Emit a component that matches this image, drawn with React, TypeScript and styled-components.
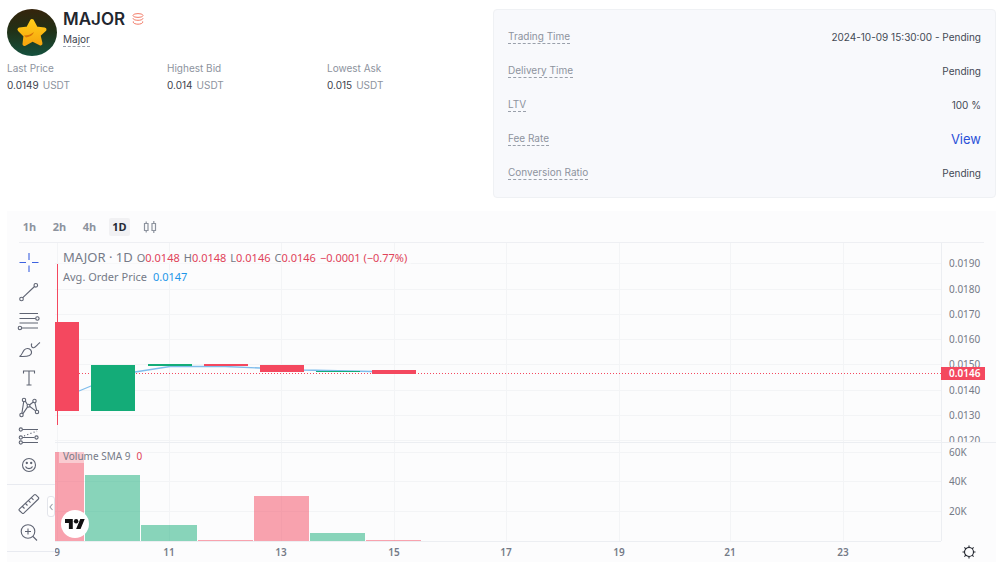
import React from "react";
import styled, { createGlobalStyle } from "styled-components";

const GlobalStyle = createGlobalStyle`
  *, *::before, *::after { box-sizing: border-box; }
  body {
    margin: 0;
    background: #ffffff;
    color: #4b515c;
    font-family: Inter, "Liberation Sans", sans-serif;
    font-size: 10px;
    line-height: 16px;
  }
  button { font: inherit; color: inherit; border: 0; background: none; padding: 0; cursor: pointer; }
`;

const chartFont = `"Noto Sans", "Open Sans", sans-serif`;
const red = "#f4485f";
const green = "#14ac78";

const Page = styled.main`
  padding: 9px 4px 0 7px;
`;

const Summary = styled.section`
  display: grid;
  grid-template-columns: 1fr 503px;
  column-gap: 6px;
  margin-bottom: 13px;
`;

const Identity = styled.div`
  display: flex;
  align-items: flex-start;
  gap: 6px;
  height: 50px;
`;

const Avatar = styled.svg`
  width: 50px;
  height: 47px;
  flex: none;
`;

const Names = styled.div`
  display: flex;
  flex-direction: column;
  align-items: flex-start;
  gap: 4px;
`;

const Title = styled.h1`
  display: flex;
  align-items: center;
  gap: 7px;
  margin: 0;
  font-size: 17px;
  line-height: 20px;
  font-weight: 600;
  color: #22262f;
`;

const Hint = styled.span<{ $strong?: boolean }>`
  border-bottom: 1px dashed #9aa0ab;
  line-height: 13px;
  color: ${(p) => (p.$strong ? "#3c424d" : "#8d939e")};
`;

const Stats = styled.dl`
  display: flex;
  margin: 0;
`;

const Stat = styled.div`
  flex: 0 0 160px;
`;

const StatLabel = styled.dt`
  line-height: 18px;
  color: #8d939e;
`;

const StatValue = styled.dd`
  margin: 0;
  line-height: 17px;
  color: #3c424d;
`;

const Unit = styled.span`
  color: #8d939e;
  margin-left: 4px;
`;

const Card = styled.dl`
  display: flex;
  flex-direction: column;
  gap: 14px;
  margin: 0;
  padding: 17px 14px 14px;
  background: #f8f9fc;
  border: 1px solid #eff1f4;
  border-radius: 4px;
`;

const CardRow = styled.div`
  display: flex;
  align-items: center;
  justify-content: space-between;
  height: 20px;
`;

const Term = styled.dt`
  display: flex;
`;

const Detail = styled.dd`
  margin: 0;
  color: #434955;
`;

const ViewLink = styled.a`
  font-size: 13px;
  color: #2a50d8;
  text-decoration: none;
`;

const Chart = styled.section`
  background: #fcfcfd;
  font-family: ${chartFont};
  font-size: 11px;
`;

const Intervals = styled.div`
  display: flex;
  align-items: center;
  gap: 9px;
  height: 32px;
  margin: 0 12px;
  border-bottom: 1px solid #eeeff3;
`;

const Interval = styled.button<{ $active?: boolean }>`
  display: flex;
  align-items: center;
  justify-content: center;
  width: 21px;
  height: 18px;
  border-radius: 2px;
  font-weight: 700;
  color: ${(p) => (p.$active ? "#262a33" : "#8d939e")};
  background: ${(p) => (p.$active ? "#f1f1f3" : "transparent")};
`;

const Workspace = styled.div`
  display: grid;
  grid-template-columns: 48px 1fr 55px;
`;

const Tools = styled.div`
  position: relative;
  padding-top: 6px;
`;

const ToolGroup = styled.div<{ $height: number }>`
  display: flex;
  flex-direction: column;
  height: ${(p) => p.$height}px;
  padding: 0 4px 5px 0;
  margin-bottom: 5px;
  border-bottom: 1px solid #e8eaf0;
`;

const Tool = styled.button<{ $active?: boolean }>`
  flex: 0 1 29px;
  min-height: 0;
  display: flex;
  align-items: center;
  justify-content: center;
  color: ${(p) => (p.$active ? "#3d62e0" : "#5f6473")};
`;

const Collapse = styled.button`
  position: absolute;
  right: 0;
  bottom: 45px;
  display: flex;
  align-items: center;
  justify-content: center;
  width: 8px;
  height: 21px;
  color: #9aa0ab;
  background: #fff;
  border: 1px solid #e3e5eb;
  border-radius: 3px;
`;

const Plot = styled.div`
  position: relative;
  min-width: 0;
`;

const Drawing = styled.svg`
  display: block;
  width: 100%;
  overflow: hidden;
  text { font-family: ${chartFont}; font-size: 10px; fill: #757a87; }
`;

const Legend = styled.div<{ $top: number; $gap: number; $small?: boolean }>`
  position: absolute;
  left: 4px;
  top: ${(p) => p.$top}px;
  display: flex;
  align-items: center;
  gap: ${(p) => p.$gap}px;
  padding: 0 4px;
  font-size: ${(p) => (p.$small ? 10 : 11)}px;
  line-height: 13px;
  color: #757a87;
  white-space: nowrap;
  background: rgba(252, 252, 253, 0.45);
`;

const Symbol = styled.span`
  font-size: 13px;
`;

const Value = styled.span<{ $color?: string }>`
  color: ${(p) => p.$color ?? "#e0435a"};
`;

const Mark = styled.a`
  position: absolute;
  left: 6px;
  top: 267px;
  display: flex;
  align-items: center;
  justify-content: center;
  width: 28px;
  height: 28px;
  border-radius: 50%;
  background: #fff;
`;

const TimeSettings = styled.div`
  display: flex;
  align-items: center;
  justify-content: center;
  height: 21px;
`;

const details: { term: string; value: React.ReactNode }[] = [
  { term: "Trading Time", value: "2024-10-09 15:30:00 - Pending" },
  { term: "Delivery Time", value: "Pending" },
  { term: "LTV", value: "100 %" },
  { term: "Fee Rate", value: <ViewLink href="#fees">View</ViewLink> },
  { term: "Conversion Ratio", value: "Pending" },
];

const stats = [
  ["Last Price", "0.0149"],
  ["Highest Bid", "0.014"],
  ["Lowest Ask", "0.015"],
];

const prices = ["0.0190", "0.0180", "0.0170", "0.0160", "0.0150", "0.0140", "0.0130", "0.0120"];
const priceY = [20, 46, 71, 96, 121, 147, 172, 197];
const volumes = [["60K", 209], ["40K", 238], ["20K", 268]] as const;
const days = [["9", 2], ["11", 114], ["13", 226], ["15", 339], ["17", 451], ["19", 564], ["21", 675], ["23", 788]] as const;

const candles = [
  [0, 24, 79, 89, red],
  [36, 44, 122, 46, green],
  [93, 44, 121, 2, green],
  [149, 44, 121, 2, red],
  [205, 44, 122, 7, red],
  [261, 44, 128, 1, green],
  [317, 44, 127, 4, red],
] as const;

const bars = [
  [0, 29, 209, red],
  [30, 55, 232, green],
  [86, 56, 282, green],
  [143, 55, 297, red],
  [199, 55, 253, red],
  [255, 55, 290, green],
  [311, 55, 297, red],
] as const;

const line = { fill: "none", stroke: "currentColor", strokeWidth: 1.1 } as const;

const Icon = ({ children }: { children: React.ReactNode }) => (
  <svg width="24" height="24" viewBox="0 0 24 24" aria-hidden="true" {...line}>{children}</svg>
);

const tools = [
  { name: "Crosshair", icon: <path d="M12 2v7M12 14.500v6.500M2.500 11.500h6.500M15 11.500h6.500" /> },
  { name: "Trend line", icon: <><path d="M5.800 17.700 17.500 6.500" /><circle cx="4.500" cy="19" r="1.800" /><circle cx="18.800" cy="5.300" r="1.800" /></> },
  { name: "Fib retracement", icon: <><path d="M2.500 4.500h18.500M2.500 9.500h16M2.500 14h18.500M4.800 19h16.200" /><circle cx="20.400" cy="9.500" r="1.700" /><circle cx="2.900" cy="19" r="1.700" /></> },
  { name: "Brush", icon: <><path d="M2.500 18.500c2.500-1 2.800-4.500 4.800-6.700 2-2 5.200-1.700 6.500.3 1.200 2 .4 4.300-1.400 5.400-2.500 1.400-6.300 1-9.900 1z" /><path d="M15 5.500c-1.500 1.300-.3 4.500 1.700 4.200 2.200-.5 3.500-3.400 6.300-5.200" /></> },
  { name: "Text", icon: <path d="M6.500 7.500v-2.500h11v2.500M12 5v14M9.500 19h5" /> },
  { name: "Patterns", icon: <><path d="M4.900 18.300 6.700 6.700M8.300 6.100 10.500 9.700M12.800 11.500 18.600 15.900M5.800 18.900l4.800-7M12.700 9.800l3.300-2.600M17.900 7.600l1.700 7.600" /><circle cx="7" cy="5" r="1.700" /><circle cx="17.500" cy="6" r="1.700" /><circle cx="4.500" cy="20" r="1.700" /><circle cx="20" cy="17" r="1.700" /><circle cx="11.500" cy="10.700" r="1.400" /></> },
  { name: "Prediction", icon: <><path d="M5.500 5.500h15.500M5.500 13.500h12M5.500 18.500h15.500" /><path d="M7 12 20 7" strokeDasharray="1.200 2.200" /><circle cx="3.800" cy="5.500" r="1.600" /><circle cx="3.800" cy="13.500" r="1.600" /><circle cx="19.500" cy="13.500" r="1.600" /><circle cx="3.800" cy="18.500" r="1.600" /></> },
  { name: "Icons", icon: <><circle cx="12" cy="12" r="6.500" /><path d="M8.500 13.500c1 2.800 6 2.800 7 0" /><circle cx="9.800" cy="10" r=".6" fill="currentColor" /><circle cx="14.200" cy="10" r=".6" fill="currentColor" /></> },
];

const moreTools = [
  { name: "Measure", icon: <path d="M2.300 17.200 17.200 2.800q.8-.7 1.600 0l2.600 2.600q.7.800 0 1.600L6.800 21.200q-.8.700-1.600 0l-2.900-2.700q-.7-.7 0-1.300zM5.500 14.500l2 2M8.500 11.500l2 2M11.500 8.700l2 2M14.500 5.800l2 2" /> },
  { name: "Zoom in", icon: <><circle cx="11" cy="11.500" r="6.800" /><path d="M16 16.500 20 20.500M11 8.500v6M8 11.500h6" /></> },
];

export default function App() {
  return (
    <>
      <GlobalStyle />
      <Page>
        <Summary>
          <div>
            <Identity>
              <Avatar viewBox="0 0 50 47" preserveAspectRatio="none" role="img" aria-label="Major token">
                <defs>
                  <linearGradient id="disc" x1="0" y1="0" x2="0" y2="1">
                    <stop offset="0" stopColor="#35240c" />
                    <stop offset="0.450" stopColor="#213016" />
                    <stop offset="1" stopColor="#15513e" />
                  </linearGradient>
                  <linearGradient id="gold" x1="0" y1="0" x2="0" y2="1">
                    <stop offset="0" stopColor="#ffcc18" />
                    <stop offset="1" stopColor="#f7a60e" />
                  </linearGradient>
                </defs>
                <ellipse cx="25" cy="23.500" rx="25" ry="23.500" fill="url(#disc)" />
                <path d="M25 12 29 19.500 37.500 20.500 31.500 26 33.500 34.500 25.500 30.500 17.500 35 18.500 26.500 12.500 20.500 21 19.500z" fill="url(#gold)" stroke="url(#gold)" strokeWidth="4" strokeLinejoin="round" />
                <path d="M17 26.500c4 0 7-1 10-3.500-1 3-4 5-8 5.500" fill="#d97408" />
              </Avatar>
              <Names>
                <Title>
                  MAJOR
                  <svg width="12" height="12" viewBox="0 0 12 12" fill="none" stroke="#f27a66" aria-hidden="true">
                    <ellipse cx="6" cy="2.500" rx="5" ry="1.900" />
                    <path d="M1.500 5c-1.200 1.300 1.500 2.300 4.500 2.300s5.700-1 4.500-2.300M1.500 8.300c-1.200 1.500 1.500 2.900 4.500 2.900s5.700-1.400 4.500-2.900" />
                  </svg>
                </Title>
                <Hint $strong>Major</Hint>
              </Names>
            </Identity>
            <Stats>
              {stats.map(([label, value]) => (
                <Stat key={label}>
                  <StatLabel>{label}</StatLabel>
                  <StatValue>{value}<Unit>USDT</Unit></StatValue>
                </Stat>
              ))}
            </Stats>
          </div>
          <Card>
            {details.map(({ term, value }) => (
              <CardRow key={term}>
                <Term><Hint>{term}</Hint></Term>
                <Detail>{value}</Detail>
              </CardRow>
            ))}
          </Card>
        </Summary>

        <Chart>
          <Intervals>
            {["1h", "2h", "4h", "1D"].map((name) => (
              <Interval key={name} $active={name === "1D"}>{name}</Interval>
            ))}
            <Interval aria-label="Chart style">
              <svg width="14" height="14" viewBox="0 0 14 14" fill="none" stroke="currentColor" strokeWidth="1.200" aria-hidden="true">
                <path d="M1.500 3.500h3.500v7h-3.500zM9 3.500h3.500v7h-3.500zM3.200 1.500v2M3.200 10.500v2M10.800 1v2.500M10.800 10.500v2.500" />
              </svg>
            </Interval>
          </Intervals>
          <Workspace>
            <Tools>
              <ToolGroup $height={236}>
                {tools.map((t, i) => (
                  <Tool key={t.name} aria-label={t.name} $active={i === 0}><Icon>{t.icon}</Icon></Tool>
                ))}
              </ToolGroup>
              <ToolGroup $height={62}>
                {moreTools.map((t) => (
                  <Tool key={t.name} aria-label={t.name}><Icon>{t.icon}</Icon></Tool>
                ))}
              </ToolGroup>
              <Collapse aria-label="Hide toolbar">
                <svg width="4" height="8" viewBox="0 0 4 8" {...line} aria-hidden="true"><path d="M3.500 1 1 4l2.500 3" /></svg>
              </Collapse>
            </Tools>

            <Plot>
              <Drawing height="319" role="img" aria-label="MAJOR daily price and volume">
                <g stroke="#f3f4f6" shapeRendering="crispEdges">
                  {days.map(([d, x]) => <line key={d} x1={x + 0.5} x2={x + 0.5} y1="0" y2="298" />)}
                  {priceY.map((y) => <line key={y} x1="0" x2="100%" y1={y + 0.5} y2={y + 0.5} />)}
                  {volumes.map(([v, y]) => <line key={v} x1="0" x2="100%" y1={y + 0.5} y2={y + 0.5} />)}
                </g>
                <g stroke="#eceef2" shapeRendering="crispEdges">
                  <line x1="0" x2="100%" y1="199.500" y2="199.500" />
                  <line x1="0" x2="100%" y1="298.500" y2="298.500" />
                </g>
                <line x1="0" x2="100%" y1="130.500" y2="130.500" stroke={red} strokeDasharray="1 2" />
                <path d="M2 157 24 148 36 143 80 129 115 123.500 170 123.500 205 125 249 127 317 128.500 340 129" fill="none" stroke="#7fbdec" strokeWidth="1.300" />
                <rect x="2" y="21" width="1" height="161" fill={red} />
                {candles.map(([x, w, y, h, c]) => <rect key={x} x={x} y={y} width={w} height={h} fill={c} />)}
                {bars.map(([x, w, y, c]) => <rect key={x} x={x} y={y} width={w} height={298 - y} fill={c} fillOpacity="0.500" />)}
                {days.map(([d, x]) => <text key={d} x={x} y="313" textAnchor="middle" fontWeight="600">{d}</text>)}
              </Drawing>
              <Legend $top={8} $gap={4}>
                <Symbol>MAJOR · 1D</Symbol>
                {[["O", "0.0148"], ["H", "0.0148"], ["L", "0.0146"], ["C", "0.0146"]].map(([k, v]) => (
                  <span key={k}>{k}<Value>{v}</Value></span>
                ))}
                <Value>−0.0001 (−0.77%)</Value>
              </Legend>
              <Legend $top={27} $gap={6}>Avg. Order Price <Value $color="#1e96e8">0.0147</Value></Legend>
              <Legend $top={207} $gap={6} $small>Volume SMA 9 <Value>0</Value></Legend>
              <Mark href="#tradingview" aria-label="TradingView">
                <svg width="20" height="14" viewBox="0 2 36 22" fill="#111" aria-hidden="true">
                  <path d="M14 22H7V11H0V4h14v18zM28 22h-8l7.500-18h8L28 22z" />
                  <circle cx="20" cy="8" r="4" />
                </svg>
              </Mark>
            </Plot>

            <div>
              <Drawing height="298" role="img" aria-label="Price scale">
                <g stroke="#eceef2" shapeRendering="crispEdges">
                  <line x1="0.500" x2="0.500" y1="0" y2="298" />
                  <line x1="0" x2="100%" y1="199.500" y2="199.500" />
                </g>
                <svg width="100%" height="199">
                  {prices.map((p, i) => <text key={p} x="8" y={priceY[i] + 4}>{p}</text>)}
                </svg>
                {volumes.map(([v, y]) => <text key={v} x="8" y={y + 4}>{v}</text>)}
                <rect x="0" y="124" width="44" height="13" fill={red} />
                <text x="8" y="134" style={{ fill: "#fff" }} fontWeight="600">0.0146</text>
              </Drawing>
              <TimeSettings>
                <svg width="14" height="14" viewBox="0 0 14 14" fill="none" stroke="#22262f" strokeWidth="1.100" aria-hidden="true">
                  <circle cx="7" cy="7" r="4.500" />
                  <path d="M7 .5v2M7 11.500v2M.5 7h2M11.500 7h2M2.400 2.400l1.400 1.400M10.200 10.200l1.400 1.400M2.400 11.600l1.400-1.400M10.200 3.800l1.400-1.400" />
                </svg>
              </TimeSettings>
            </div>
          </Workspace>
        </Chart>
      </Page>
    </>
  );
}
